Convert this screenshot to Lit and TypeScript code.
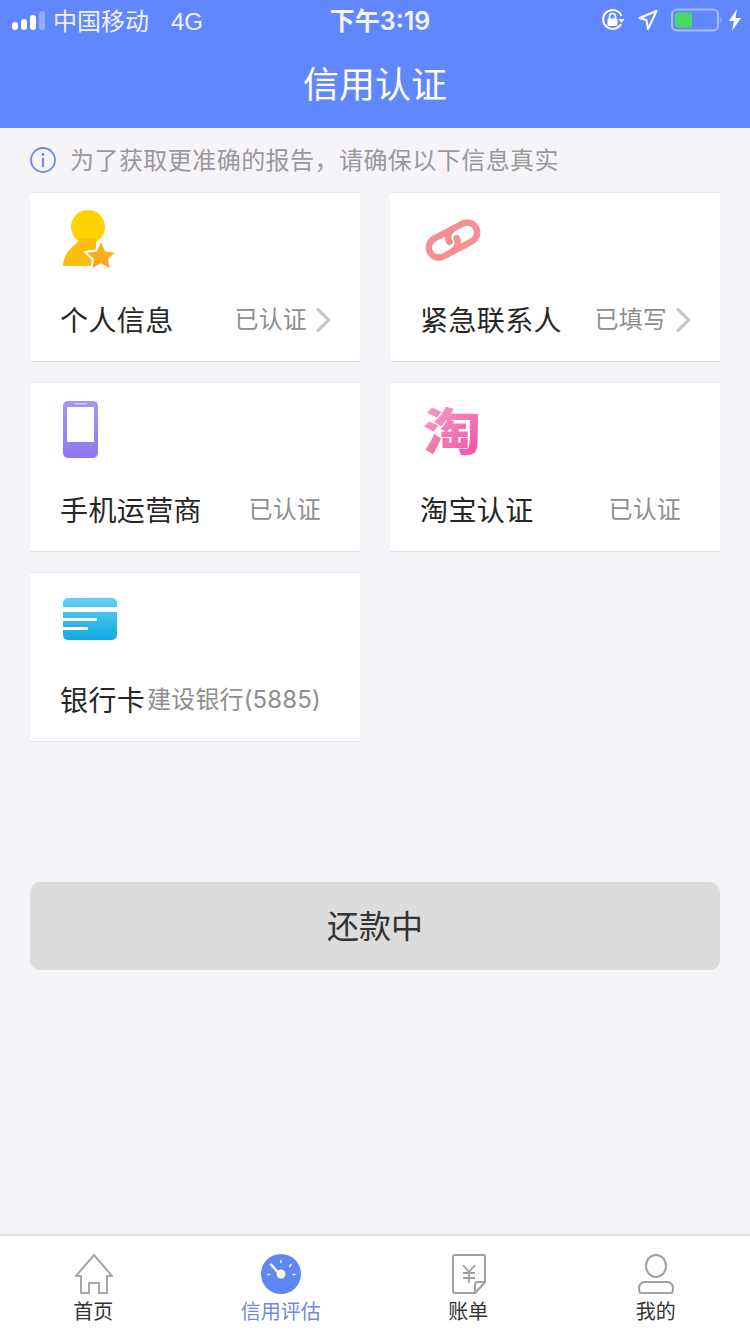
import { LitElement, html, css, svg } from "lit";
import { customElement } from "lit/decorators.js";

const chevron = html`<svg class="chev" width="16" height="26" viewBox="0 0 16 26"><path d="M2 1.500 L13.500 13 L2 24.500" fill="none" stroke="#c8c8c8" stroke-width="3.200"/></svg>`;

const person = svg`<svg width="60" height="64" viewBox="0 0 60 64">
<defs>
<linearGradient id="sg" x1="0" y1="0" x2="0" y2="1"><stop offset="0" stop-color="#fdbb1c"/><stop offset="1" stop-color="#f9a11b"/></linearGradient>
</defs>
<circle cx="28" cy="19" r="17" fill="#ffd200"/>
<path d="M19 30 C18 38 5 39 3 57 Q3 58 4 58 H36 V30Z" fill="#fcbe0c"/>
<path d="M41 31 L45.800 42.500 L57 44 L49 51.500 L51 62 L41 56.500 L31 62 L33 51.500 L25 44 L36.200 42.500Z" fill="url(#sg)" stroke="#fff" stroke-width="2" stroke-linejoin="round"/>
</svg>`;

const link = svg`<svg width="64" height="64" viewBox="0 0 64 64">
<g fill="none" stroke="#f68f94" stroke-width="6.500" stroke-linecap="round" transform="translate(33 32) rotate(-28)">
<path d="M5 -10 H-16 A10 10 0 0 0 -16 10 H-6 A10 10 0 0 0 4 0"/>
<path d="M-5 10 H16 A10 10 0 0 0 16 -10 H6 A10 10 0 0 0 -4 0"/>
</g></svg>`;

const phone = svg`<svg width="60" height="64" viewBox="0 0 60 64">
<defs><linearGradient id="ph" x1="0" y1="0" x2="0" y2="1"><stop offset="0" stop-color="#a594f9"/><stop offset="1" stop-color="#8f78ef"/></linearGradient></defs>
<rect x="3" y="3" width="35" height="57" rx="5" fill="url(#ph)"/>
<rect x="7" y="9" width="27" height="35" fill="#fff"/>
<rect x="14" y="5" width="13" height="1.500" rx=".7" fill="#cfc6fb"/>
</svg>`;

const card = svg`<svg width="60" height="64" viewBox="0 0 60 64">
<defs><linearGradient id="cd" x1="0" y1="0" x2="0" y2="1"><stop offset="0" stop-color="#62d0f6"/><stop offset="1" stop-color="#12a9e2"/></linearGradient></defs>
<rect x="3" y="10" width="54" height="42" rx="5" fill="url(#cd)"/>
<rect x="3" y="19" width="54" height="5" fill="#fff"/>
<rect x="3" y="30" width="34" height="3" fill="#fff"/>
<rect x="3" y="39" width="25" height="3" fill="#fff"/>
</svg>`;

const home = svg`<svg width="40" height="40" viewBox="0 0 40 40"><path d="M7 39 V22 H2 L20 1 L38 22 H33 V39 H25 V29 H15 V39Z" fill="none" stroke="#a6a6a6" stroke-width="2" stroke-linejoin="round"/></svg>`;

const gauge = svg`<svg width="40" height="40" viewBox="0 0 40 40">
<circle cx="20" cy="20" r="20" fill="#6086f4"/>
<circle cx="20" cy="20" r="4.500" fill="#fff3c8"/>
<path d="M18.500 20 L10 10.500" stroke="#fff" stroke-width="2.500" stroke-linecap="round"/>
<path d="M20 6.500 V8.500 M30 10.500 L28.800 12.500 M34 20.500 H32 M6.500 20.500 H8.500" stroke="#fff" stroke-width="1.600" stroke-linecap="round" opacity=".9"/>
</svg>`;

const bill = svg`<svg width="40" height="40" viewBox="0 0 40 40">
<path d="M26 39 H6 Q4 39 4 37 V3 Q4 1 6 1 H35 Q36 1 36 3 V28 Z" fill="none" stroke="#a0a0a0" stroke-width="2" stroke-linejoin="round"/>
<path d="M26 39 V31 Q26 28 29 28 H36 Z" fill="#fff" stroke="#a0a0a0" stroke-width="2" stroke-linejoin="round"/>
<path d="M14 11 L20 18 L26 11 M14 19 H26 M14 24 H26 M20 18 V29" fill="none" stroke="#a0a0a0" stroke-width="1.800"/>
</svg>`;

const me = svg`<svg width="40" height="40" viewBox="0 0 40 40">
<ellipse cx="20" cy="12" rx="10" ry="11" fill="none" stroke="#a0a0a0" stroke-width="2"/>
<path d="M9 28 H31 C35 28 37 31 37 35 Q37 39 35 39 H5 Q3 39 3 35 C3 31 5 28 9 28Z" fill="none" stroke="#a0a0a0" stroke-width="2"/>
</svg>`;

@customElement("app-root")
export class AppRoot extends LitElement {
  static styles = css`
    :host {
      display: block;
      font-family: "Noto Sans CJK SC", "Liberation Sans", sans-serif;
    }
    .page {
      height: 1334px;
      display: flex;
      flex-direction: column;
      background: #f6f4f9;
      overflow: hidden;
    }
    .head {
      height: 128px;
      background: #6187ff;
      color: #fff;
      flex: none;
    }
    .status {
      height: 40px;
      padding: 0 8px 0 12px;
      display: grid;
      grid-template-columns: 1fr auto 1fr;
      align-items: center;
      font-size: 24px;
      line-height: 36px;
      color: #eef2ff;
    }
    .left { display: flex; align-items: center; }
    .right { display: flex; align-items: center; justify-content: flex-end; }
    .bars { display: flex; align-items: flex-end; gap: 3px; margin-right: 8px; }
    .bars i { width: 6px; background: #fff; border-radius: 3px; display: block; }
    .bars i:last-child { background: #93adff; }
    .carrier { display: flex; align-items: baseline; padding-top: 2px; }
    .net { margin-left: 22px; font-family: "Liberation Sans", sans-serif; }
    .time {
      font-family: "Inter", "Noto Sans CJK SC", sans-serif;
      font-size: 25px;
      font-weight: 600;
      padding-top: 2px;
      position: relative;
      left: 3px;
      color: #f2f5ff;
    }
    .title {
      height: 88px;
      display: flex;
      align-items: center;
      justify-content: center;
      font-size: 36px;
      line-height: 88px;
      padding-bottom: 4px;
      box-sizing: border-box;
    }
    .notice {
      height: 64px;
      flex: none;
      display: flex;
      align-items: center;
      padding-left: 30px;
      gap: 14px;
      font-size: 24px;
      letter-spacing: 0.45px;
      color: #999;
    }
    .notice svg { flex: none; }
    .notice span { margin-bottom: 4px; }
    .grid {
      display: grid;
      grid-template-columns: 330px 330px;
      column-gap: 30px;
      row-gap: 20px;
      padding: 0 30px;
    }
    .card {
      height: 170px;
      box-sizing: border-box;
      background: #fff;
      border-top: 1px solid #ebebeb;
      border-bottom: 1px solid #dedede;
      padding: 0 30px;
      display: flex;
      flex-direction: column;
    }
    .icon { height: 64px; margin-top: 15px; flex: none; }
    .icon svg { display: block; }
    .row {
      margin-top: 27px;
      display: flex;
      align-items: center;
      justify-content: space-between;
      height: 40px;
      white-space: nowrap;
    }
    .name { font-size: 28px; letter-spacing: 0.4px; color: #262626; line-height: 40px; }
    .val {
      display: flex;
      align-items: center;
      font-family: "Inter", "Noto Sans CJK SC", sans-serif;
      font-size: 24px;
      letter-spacing: 0.15px;
      color: #8e8e8e;
      line-height: 40px;
      margin: 2px 9px 0 0;
    }
    .val.arrow { margin-right: -1px; }
    .chev { margin-left: 8px; }
    .tao {
      display: block;
      width: 50px;
      height: 60px;
      margin-left: 3px;
      font-size: 50px;
      line-height: 60px;
      font-weight: 900;
      background: linear-gradient(135deg, #f9a6cc, #ee4f9f);
      -webkit-background-clip: text;
      background-clip: text;
      color: transparent;
      transform: scaleX(1.16);
      transform-origin: left center;
    }
    .btn {
      margin: 140px 30px 0;
      height: 88px;
      box-sizing: border-box;
      padding-bottom: 4px;
      border-radius: 10px;
      background: #dcdcdc;
      color: #333;
      font-size: 32px;
      display: flex;
      align-items: center;
      justify-content: center;
    }
    .tabs {
      margin-top: auto;
      height: 100px;
      flex: none;
      box-sizing: border-box;
      background: #fff;
      border-top: 2px solid #e2e2e2;
      display: grid;
      grid-template-columns: repeat(4, 187.5px);
    }
    .tab {
      display: flex;
      flex-direction: column;
      align-items: center;
      padding-top: 18px;
      font-size: 20px;
      line-height: 26px;
      color: #333;
    }
    .tab svg { display: block; height: 40px; margin-bottom: 4px; }
    .tab span { margin-left: -1px; }
    .tab.on { color: #6b8be8; }
  `;

  private item(icon: unknown, name: string, val: string, arrow = false) {
    return html`<div class="card">
      <div class="icon">${icon}</div>
      <div class="row">
        <span class="name">${name}</span>
        <span class="val ${arrow ? "arrow" : ""}">${val}${arrow ? chevron : ""}</span>
      </div>
    </div>`;
  }

  render() {
    return html`<div class="page">
      <div class="head">
        <div class="status">
          <div class="left">
            <div class="bars">
              <i style="height:8px"></i><i style="height:11px"></i><i style="height:15px"></i><i style="height:19px"></i>
            </div>
            <div class="carrier"><span>中国移动</span><span class="net">4G</span></div>
          </div>
          <div class="time">下午3:19</div>
          <div class="right">
            <svg width="24" height="24" viewBox="0 0 24 24" style="margin-right:13px">
              <path d="M20 16 A9.500 9.500 0 1 1 20.500 8" fill="none" stroke="#fff" stroke-width="2"/>
              <path d="M17.500 11 H23.500 L20.500 15Z" fill="#fff"/>
              <rect x="6.500" y="10.500" width="10" height="7.500" rx="1" fill="#fff"/>
              <path d="M8.500 11 V8.500 A3 3 0 0 1 14.500 8.500 V11" fill="none" stroke="#fff" stroke-width="1.600"/>
            </svg>
            <svg width="20" height="22" viewBox="0 0 20 22" style="margin-right:13px">
              <path d="M18.500 2 L10 20 L8.500 11 L1.500 9Z" fill="none" stroke="#fff" stroke-width="2" stroke-linejoin="round"/>
            </svg>
            <svg width="52" height="24" viewBox="0 0 52 24">
              <rect x="1" y="1.500" width="46" height="21" rx="5" fill="none" stroke="#a9bdff" stroke-width="2"/>
              <rect x="4" y="4.500" width="17" height="15" rx="2" fill="#4cd964"/>
              <path d="M49.500 9 Q51.500 12 49.500 15Z" fill="#a9bdff"/>
            </svg>
            <svg width="14" height="22" viewBox="0 0 14 22" style="margin-left:5px">
              <path d="M9 0 L1 12 H6 L4 22 L13 9 H7.500Z" fill="#fff"/>
            </svg>
          </div>
        </div>
        <div class="title">信用认证</div>
      </div>
      <div class="notice">
        <svg width="26" height="26" viewBox="0 0 26 26">
          <circle cx="13" cy="13" r="12" fill="none" stroke="#6b8be8" stroke-width="1.800"/>
          <circle cx="13" cy="7.500" r="1.400" fill="#6b8be8"/>
          <path d="M13 11 V20" stroke="#6b8be8" stroke-width="2"/>
        </svg>
        <span>为了获取更准确的报告，请确保以下信息真实</span>
      </div>
      <div class="grid">
        ${this.item(person, "个人信息", "已认证", true)}
        ${this.item(link, "紧急联系人", "已填写", true)}
        ${this.item(phone, "手机运营商", "已认证")}
        ${this.item(html`<span class="tao">淘</span>`, "淘宝认证", "已认证")}
        ${this.item(card, "银行卡", "建设银行(5885)")}
      </div>
      <div class="btn">还款中</div>
      <div class="tabs">
        <div class="tab">${home}<span>首页</span></div>
        <div class="tab on">${gauge}<span>信用评估</span></div>
        <div class="tab">${bill}<span>账单</span></div>
        <div class="tab">${me}<span>我的</span></div>
      </div>
    </div>`;
  }
}
